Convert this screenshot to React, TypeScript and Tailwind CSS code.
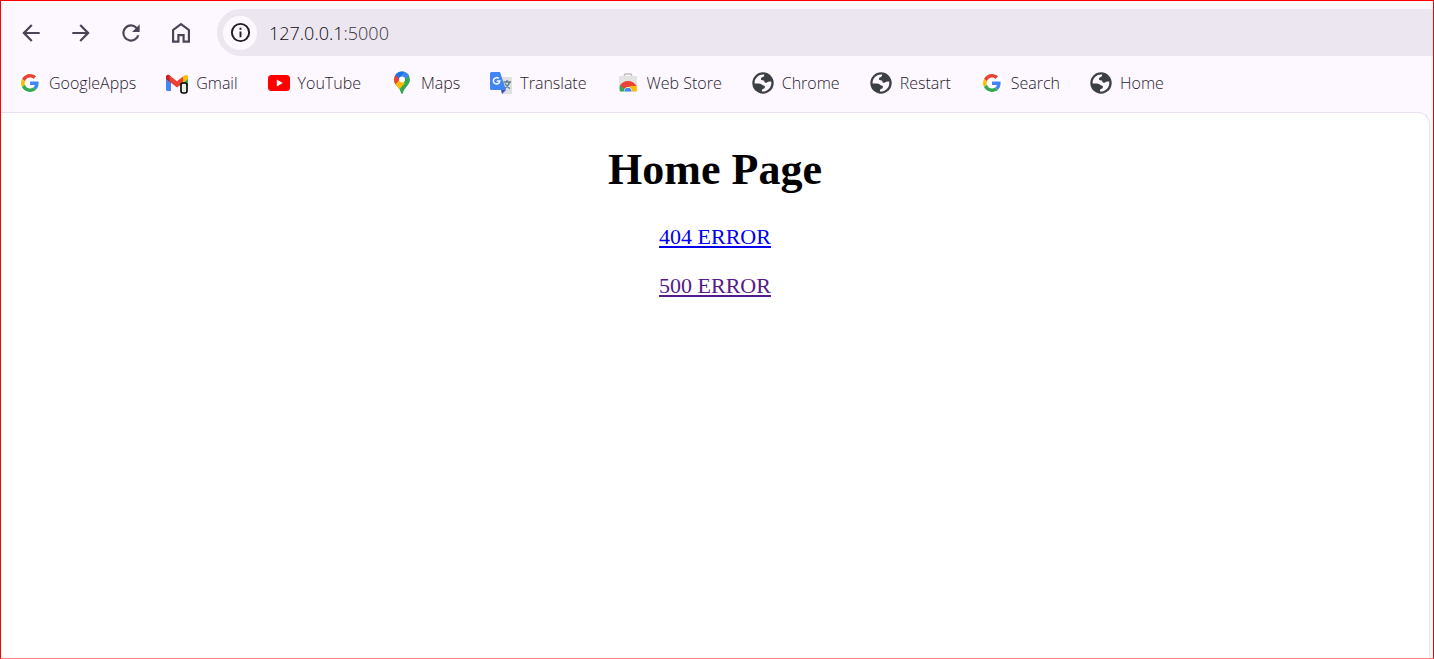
import React from "react";

const Google = () => (
  <span className="flex size-[22px] items-center justify-center rounded-full bg-white">
    <svg viewBox="0 0 48 48" className="size-[18px]" aria-hidden="true">
      <path fill="#EA4335" d="M24 9.5c3.54 0 6.71 1.22 9.21 3.6l6.85-6.85C35.9 2.38 30.47 0 24 0 14.62 0 6.51 5.38 2.56 13.22l7.98 6.19C12.43 13.72 17.74 9.5 24 9.5z" />
      <path fill="#4285F4" d="M46.98 24.55c0-1.57-.15-3.09-.38-4.55H24v9.02h12.94c-.58 2.96-2.26 5.48-4.78 7.18l7.73 6c4.51-4.18 7.09-10.36 7.09-17.65z" />
      <path fill="#FBBC05" d="M10.53 28.59c-.48-1.45-.76-2.99-.76-4.59s.27-3.14.76-4.59l-7.98-6.19C.92 16.46 0 20.12 0 24c0 3.88.92 7.54 2.56 10.78l7.97-6.19z" />
      <path fill="#34A853" d="M24 48c6.48 0 11.93-2.13 15.89-5.81l-7.73-6c-2.15 1.45-4.92 2.3-8.16 2.3-6.26 0-11.57-4.22-13.47-9.91l-7.98 6.19C6.51 42.62 14.62 48 24 48z" />
    </svg>
  </span>
);

const Gmail = () => (
  <svg viewBox="0 0 22 22" className="size-[22px]" aria-hidden="true">
    <path fill="#4285F4" d="M0 6l5 4v9H1.500a1.500 1.500 0 0 1-1.500-1.500z" />
    <path fill="#34A853" d="M17 10l5-4v8h-5z" />
    <path fill="#FBBC04" d="M17 4.500l2-1.300a2 2 0 0 1 3 1.700V7l-5 4z" />
    <path fill="#C5221F" d="M0 7V4.500a2 2 0 0 1 3-1.500l2 1.500V11z" />
    <path fill="#EA4335" d="M3 3l2 1.500 6 4.700 6-4.700V11l-6 4.500L4 10z" />
    <rect x="15" y="11" width="6" height="10" rx="2" fill="#e6f4ea" stroke="#000" strokeWidth="1.600" />
  </svg>
);

const YouTube = () => (
  <svg viewBox="0 0 22 22" className="size-[22px]" aria-hidden="true">
    <rect y="3" width="22" height="16" rx="3.500" fill="#f00" />
    <path fill="#fff" d="M8.800 7.500l6 3.500-6 3.500z" />
  </svg>
);

const Maps = () => (
  <svg viewBox="0 0 22 24" className="h-6 w-[22px]" aria-hidden="true">
    <defs>
      <clipPath id="pin">
        <path d="M11 .5A8 8 0 0 0 3 8.500c0 3 1.400 4.800 3.500 7.300C8.600 18.300 9.500 20 10 22q1 2 2 0c.5-2 1.400-3.700 3.500-6.200C17.600 13.300 19 11.500 19 8.500A8 8 0 0 0 11 .5z" />
      </clipPath>
    </defs>
    <g clipPath="url(#pin)">
      <path fill="#34A853" d="M0 0h22v24H0z" />
      <path fill="#FBBC04" d="M0 13l9-5 5 4-8 9H0z" />
      <path fill="#EA4335" d="M0 2h4l6 5-6 7H0z" />
      <path fill="#1A73E8" d="M4 3l2-4h9l-7 9z" />
      <path fill="#4285F4" d="M14 0L8 8l5 1 6-5-2-4z" />
    </g>
    <circle cx="11" cy="8.500" r="3" fill="#fff" />
  </svg>
);

const Translate = () => (
  <svg viewBox="0 0 22 22" className="size-[22px]" aria-hidden="true">
    <path fill="#dfe0e1" d="M8 5h12.500A1.500 1.500 0 0 1 22 6.500v14a1.500 1.500 0 0 1-1.500 1.500H12z" />
    <path fill="#3f51b5" d="M11 18h5l-4 4z" />
    <path fill="#4285F4" d="M1.500 0H10l6 18H1.500A1.500 1.500 0 0 1 0 16.500v-15A1.500 1.500 0 0 1 1.500 0z" />
    <path fill="none" stroke="#fff" strokeWidth="1.500" d="M8.800 6.500A3.200 3.200 0 1 0 9.800 9H6.800" />
    <path fill="none" stroke="#607d8b" strokeWidth="1.400" d="M13.500 10h7.500M17 8v2M19.500 10q-1 4-4.500 6.500M15 11.500q2 3.500 5 5" />
  </svg>
);

const WebStore = () => (
  <svg viewBox="0 0 22 22" className="size-[22px]" aria-hidden="true">
    <path fill="none" stroke="#bdbdbd" strokeWidth="1.500" d="M7.500 4.500V3q0-1 1-1h5q1 0 1 1v1.500" />
    <path fill="#e3e3e3" d="M2 4h18v14a1.500 1.500 0 0 1-1.500 1.500h-15A1.500 1.500 0 0 1 2 18z" />
    <path fill="#34A853" d="M3 13l6 3-1 3.500H3Q2 16 3 13z" />
    <path fill="#FBBC04" d="M12 14h7.500q.8 3 0 5.500H13z" />
    <path fill="#EA4335" d="M3 13.500Q5.500 9 11 9t8.500 5H14l-6 3z" />
    <path fill="#fff" d="M7 19.500a4 4.500 0 0 1 8 0z" />
    <path fill="#4285F4" d="M7.500 19.500a3.500 3.800 0 0 1 7 0z" />
  </svg>
);

const Globe = () => (
  <svg viewBox="0 0 22 22" className="size-[22px]" aria-hidden="true">
    <circle cx="11" cy="11" r="10.700" fill="#3c4043" />
    <path
      fill="#fdf7ff"
      d="M12.200 2.600Q12.500 4.500 10.800 5q-2 .6-2 1.900 0 1.300 2 1.300 1.600 0 1.800 1.700.3 1.100 2 .9 1.800-1.800 4.600-1.200a8.400 8.400 0 0 1-9.200 9.800q-.6-2 1-2.400 2-.4 2-1.900 0-1.600-2.200-1.800-1.800-2-4-1.900L2.600 11.600A8.500 8.500 0 0 1 12.200 2.600z"
    />
  </svg>
);

const bookmarks = [
  { label: "GoogleApps", Icon: Google },
  { label: "Gmail", Icon: Gmail },
  { label: "YouTube", Icon: YouTube },
  { label: "Maps", Icon: Maps },
  { label: "Translate", Icon: Translate },
  { label: "Web Store", Icon: WebStore },
  { label: "Chrome", Icon: Globe },
  { label: "Restart", Icon: Globe },
  { label: "Search", Icon: Google },
  { label: "Home", Icon: Globe },
];

const tools = [
  { label: "Back", d: "M20 11H7.830l5.590-5.590L12 4l-8 8 8 8 1.410-1.410L7.830 13H20v-2z" },
  { label: "Forward", d: "M12 4l-1.410 1.410L16.170 11H4v2h12.170l-5.580 5.590L12 20l8-8z" },
  { label: "Reload", d: "M17.650 6.350A7.960 7.960 0 0 0 12 4a8 8 0 1 0 7.730 10h-2.080A6 6 0 1 1 12 6c1.660 0 3.140.69 4.220 1.780L13 11h7V4z" },
  { label: "Home", d: "M12 2.500L3.700 8.700v12.200h6.900v-6h2.800v6h6.900V8.700zM12 5l6.300 4.800v9.100h-2.900v-6H8.600v6H5.700V9.800z" },
];

export default function App() {
  return (
    <div className="flex min-h-screen flex-col border border-[#ff0000] border-b-[#ff8080] bg-[#fdf7ff] font-['Open_Sans',sans-serif]">
      <header>
        <div className="flex items-center pt-2">
          <nav aria-label="Navigation" className="flex gap-6 pr-[23px] pl-[17px]">
            {tools.map(({ label, d }) => (
              <button key={label} type="button" aria-label={label} className="text-[#4a4458]">
                <svg viewBox="0 0 24 24" fill="currentColor" fillRule="evenodd" className="size-[26px]">
                  <path d={d} />
                </svg>
              </button>
            ))}
          </nav>
          <div className="flex h-[47px] flex-1 items-center gap-3 rounded-l-full bg-[#ece6f0] pl-[6px]">
            <button type="button" aria-label="Site information" className="flex size-[34px] items-center justify-center rounded-full bg-[#fdf7ff]">
              <svg viewBox="0 0 24 24" fill="#1d1b20" className="size-[23px]">
                <path d="M11 7h2v2h-2zm0 4h2v6h-2zm1-9a10 10 0 1 0 0 20 10 10 0 0 0 0-20zm0 18a8 8 0 1 1 0-16 8 8 0 0 1 0 16z" />
              </svg>
            </button>
            <p className="text-lg leading-6 font-light text-[#3a3640]">
              <span className="text-[#0c0a0e]">127.0.0.1</span>:5000
            </p>
          </div>
        </div>
        <nav aria-label="Bookmarks" className="flex h-14 items-center gap-[30px] pb-0.5 pl-[18px]">
          {bookmarks.map(({ label, Icon }) => (
            <a key={label} href="#" className="flex items-center gap-2 text-base leading-6 font-light whitespace-nowrap text-[#26222c]">
              <Icon />
              {label}
            </a>
          ))}
        </nav>
      </header>
      <main className="mr-[3px] flex flex-1 flex-col items-center rounded-tr-xl border-t border-r border-[#e7dfec] bg-white pt-8 font-['Liberation_Serif',serif] text-[22px] leading-[25px]">
        <h1 className="text-[44px] leading-[50px] font-bold text-black">Home Page</h1>
        <a href="#" className="mt-[29px] text-[#0000ee] underline">404 ERROR</a>
        <a href="#" className="mt-6 text-[#551a8b] underline">500 ERROR</a>
      </main>
    </div>
  );
}
